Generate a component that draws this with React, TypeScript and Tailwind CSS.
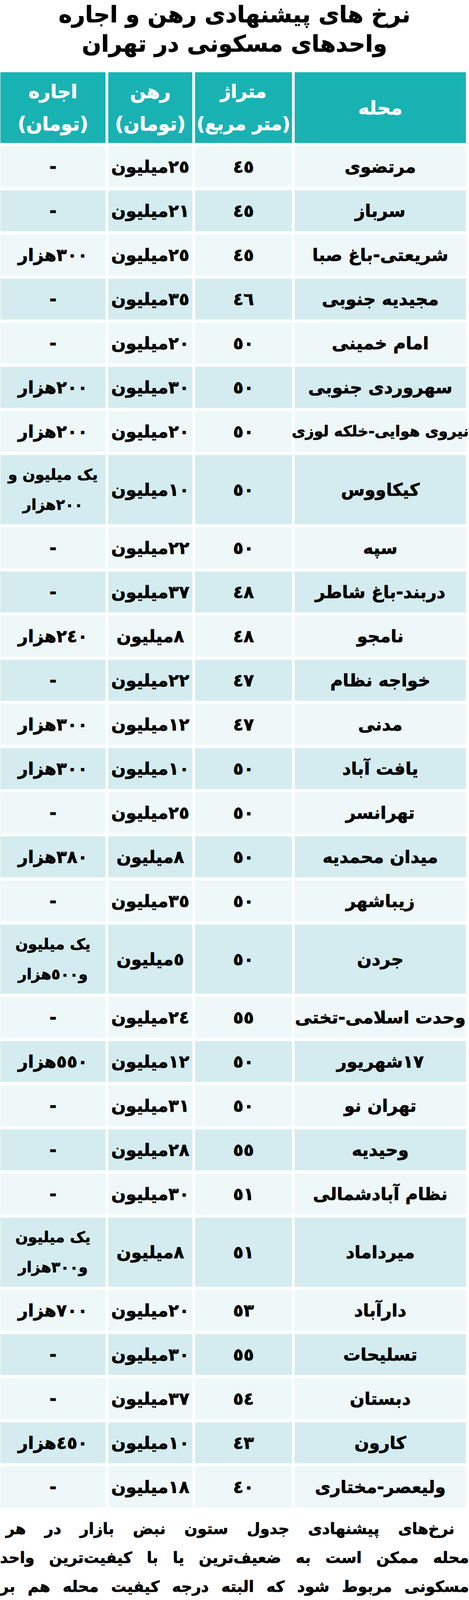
/**
 * App.tsx
 *
 * Tehran rent & mortgage table — static newspaper infographic.
 */

type Row = {
  area: string;
  size: string;
  rahn: string;
  ejare: string[];
};

const rows: Row[] = [
  { area: "مرتضوی", size: "٤٥", rahn: "٢٥میلیون", ejare: ["-"] },
  { area: "سرباز", size: "٤٥", rahn: "٢١میلیون", ejare: ["-"] },
  { area: "شریعتی-باغ صبا", size: "٤٥", rahn: "٢٥میلیون", ejare: ["٣٠٠هزار"] },
  { area: "مجیدیه جنوبی", size: "٤٦", rahn: "٣٥میلیون", ejare: ["-"] },
  { area: "امام خمینی", size: "٥٠", rahn: "٢٠میلیون", ejare: ["-"] },
  { area: "سهروردی جنوبی", size: "٥٠", rahn: "٣٠میلیون", ejare: ["٢٠٠هزار"] },
  { area: "نیروی هوایی-خلکه لوزی", size: "٥٠", rahn: "٢٠میلیون", ejare: ["٢٠٠هزار"] },
  { area: "کیکاووس", size: "٥٠", rahn: "١٠میلیون", ejare: ["یک میلیون و", "٢٠٠هزار"] },
  { area: "سپه", size: "٥٠", rahn: "٢٢میلیون", ejare: ["-"] },
  { area: "دربند-باغ شاطر", size: "٤٨", rahn: "٣٧میلیون", ejare: ["-"] },
  { area: "نامجو", size: "٤٨", rahn: "٨میلیون", ejare: ["٢٤٠هزار"] },
  { area: "خواجه نظام", size: "٤٧", rahn: "٢٢میلیون", ejare: ["-"] },
  { area: "مدنی", size: "٤٧", rahn: "١٢میلیون", ejare: ["٣٠٠هزار"] },
  { area: "یافت آباد", size: "٥٠", rahn: "١٠میلیون", ejare: ["٣٠٠هزار"] },
  { area: "تهرانسر", size: "٥٠", rahn: "٢٥میلیون", ejare: ["-"] },
  { area: "میدان محمدیه", size: "٥٠", rahn: "٨میلیون", ejare: ["٣٨٠هزار"] },
  { area: "زیباشهر", size: "٥٠", rahn: "٣٥میلیون", ejare: ["-"] },
  { area: "جردن", size: "٥٠", rahn: "٥میلیون", ejare: ["یک میلیون", "و٥٠٠هزار"] },
  { area: "وحدت اسلامی-تختی", size: "٥٥", rahn: "٢٤میلیون", ejare: ["-"] },
  { area: "١٧شهریور", size: "٥٠", rahn: "١٢میلیون", ejare: ["٥٥٠هزار"] },
  { area: "تهران نو", size: "٥٠", rahn: "٣١میلیون", ejare: ["-"] },
  { area: "وحیدیه", size: "٥٥", rahn: "٢٨میلیون", ejare: ["-"] },
  { area: "نظام آبادشمالی", size: "٥١", rahn: "٣٠میلیون", ejare: ["-"] },
  { area: "میرداماد", size: "٥١", rahn: "٨میلیون", ejare: ["یک میلیون", "و٣٠٠هزار"] },
  { area: "دارآباد", size: "٥٣", rahn: "٢٠میلیون", ejare: ["٧٠٠هزار"] },
  { area: "تسلیحات", size: "٥٥", rahn: "٣٠میلیون", ejare: ["-"] },
  { area: "دبستان", size: "٥٤", rahn: "٣٧میلیون", ejare: ["-"] },
  { area: "کارون", size: "٤٣", rahn: "١٠میلیون", ejare: ["٤٥٠هزار"] },
  { area: "ولیعصر-مختاری", size: "٤٠", rahn: "١٨میلیون", ejare: ["-"] },
];

const font = "font-['DejaVu_Sans',sans-serif]";

export default function App() {
  return (
    <div
      className={`w-[1200px] bg-white text-black font-bold [-webkit-text-stroke:1px_currentColor] ${font}`}
      dir="rtl"
    >
      {/* title */}
      <h1 className="text-center text-[58px] leading-[75px] mb-[35px]">
        <div>نرخ های پیشنهادی رهن و اجاره</div>
        <div>واحدهای مسکونی در تهران</div>
      </h1>

      {/* table */}
      <div className="w-[1192px] ml-auto mr-[8px] grid grid-cols-[438px_248px_215px_269px] gap-x-[7px] gap-y-[8px]">
        <div className="h-[181px] bg-[#19b2b3] text-white text-[48px] flex items-center justify-center">
          محله
        </div>
        <div className="h-[181px] bg-[#19b2b3] text-white text-[46px] leading-[83px] flex flex-col items-center justify-center">
          <span>متراژ</span>
          <span>(متر مربع)</span>
        </div>
        <div className="h-[181px] bg-[#19b2b3] text-white text-[48px] leading-[83px] flex flex-col items-center justify-center">
          <span>رهن</span>
          <span>(تومان)</span>
        </div>
        <div className="h-[181px] bg-[#19b2b3] text-white text-[48px] leading-[83px] flex flex-col items-center justify-center">
          <span>اجاره</span>
          <span>(تومان)</span>
        </div>

        {rows.map((r, i) => {
          const bg = i % 2 === 0 ? "bg-[#eef8f8]" : "bg-[#d4ecef]";
          const tall = r.ejare.length > 1;
          const h = tall ? "h-[177px]" : "h-[105px]";
          const cell = `${h} ${bg} flex items-center justify-center whitespace-nowrap`;
          const areaSize = r.area.length > 18 ? "text-[38px]" : "text-[44px]";
          return (
            <div key={r.area} className="contents">
              <div className={`${cell} ${areaSize}`}>{r.area}</div>
              <div className={`${cell} text-[44px]`}>{r.size}</div>
              <div className={`${cell} text-[44px]`}>{r.rahn}</div>
              <div
                className={`${cell} flex-col leading-[77px] ${tall ? "text-[38px]" : "text-[44px]"}`}
              >
                {r.ejare.map((t) => (
                  <span key={t}>{t}</span>
                ))}
              </div>
            </div>
          );
        })}
      </div>

      {/* footnote */}
      <div className="mt-[18px] text-[39px] leading-[74px]">
        <div className="pr-[37px] pl-[15px] text-justify [text-align-last:justify]">
          نرخ‌های پیشنهادی جدول ستون نبض بازار در هر
        </div>
        <div className="text-justify [text-align-last:justify]">
          محله ممکن است به ضعیف‌ترین یا با کیفیت‌ترین واحد
        </div>
        <div className="text-justify [text-align-last:justify]">
          مسکونی مربوط شود که البته درجه کیفیت محله هم بر
        </div>
        <div className="text-right">این امر تاثیر بسزایی دارد.</div>
      </div>
    </div>
  );
}
